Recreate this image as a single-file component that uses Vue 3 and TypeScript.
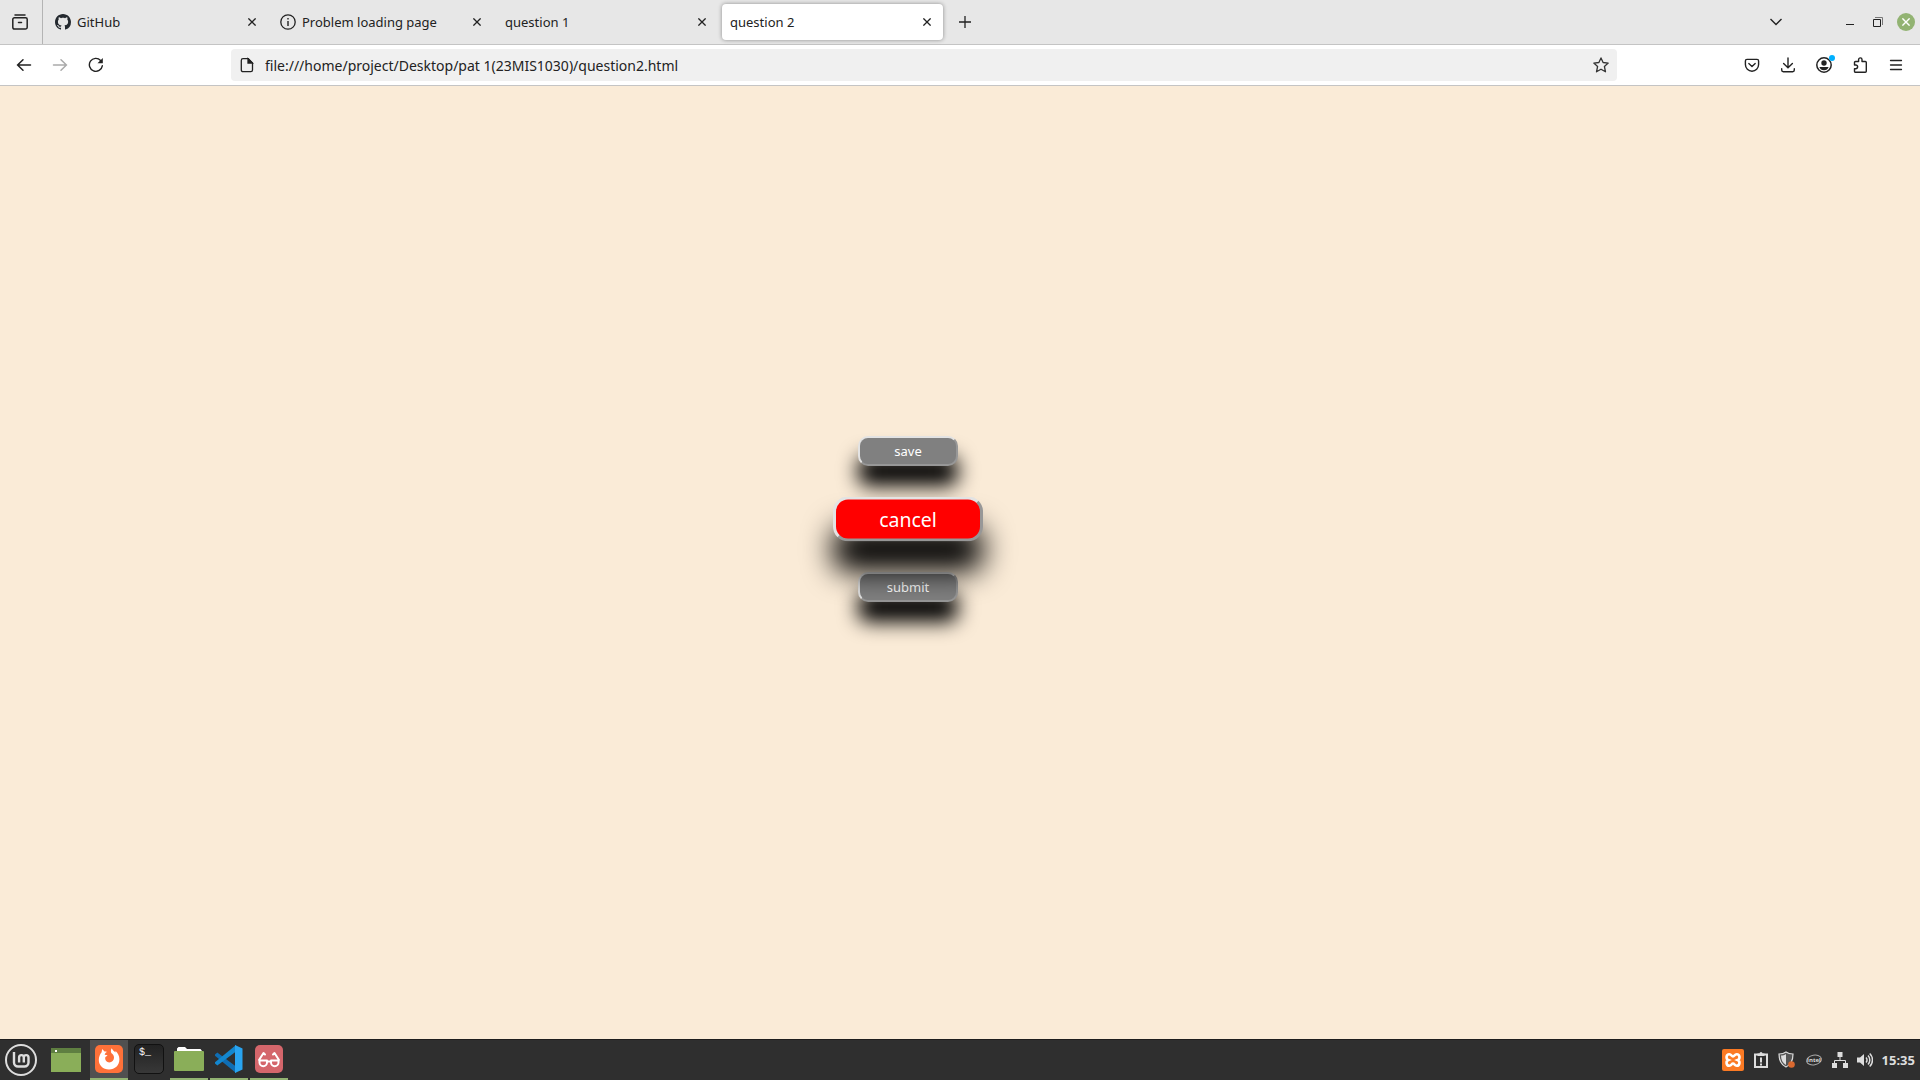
<script setup lang="ts">
interface Tab {
  title: string
  icon?: 'github' | 'info'
  active?: boolean
}

const tabs: Tab[] = [
  { title: 'GitHub', icon: 'github' },
  { title: 'Problem loading page', icon: 'info' },
  { title: 'question 1' },
  { title: 'question 2', active: true },
]

const url = 'file:///home/project/Desktop/pat 1(23MIS1030)/question2.html'
</script>

<template>
  <div class="screen">
    <header class="tabstrip">
      <button class="view-btn" aria-label="Recent browsing">
        <svg width="16" height="16" viewBox="0 0 16 16" fill="none" stroke="#222" stroke-width="1.5" stroke-linecap="round">
          <path d="M3 .9h10M2.4 3.7h11.2a1.6 1.6 0 0 1 1.6 1.6v8a1.8 1.8 0 0 1-1.8 1.8H2.6a1.8 1.8 0 0 1-1.8-1.8v-8a1.6 1.6 0 0 1 1.6-1.6zM6.5 8.4h3" />
        </svg>
      </button>
      <div class="tabs">
        <div v-for="tab in tabs" :key="tab.title" class="tab" :class="{ active: tab.active }">
          <svg v-if="tab.icon === 'github'" width="16" height="16" viewBox="0 0 16 16" fill="#24292f">
            <path d="M8 0C3.58 0 0 3.58 0 8c0 3.54 2.29 6.53 5.47 7.59.4.07.55-.17.55-.38 0-.19-.01-.82-.01-1.49-2.01.37-2.53-.49-2.69-.94-.09-.23-.48-.94-.82-1.13-.28-.15-.68-.52-.01-.53.63-.01 1.08.58 1.23.82.72 1.21 1.87.87 2.33.66.07-.52.28-.87.51-1.07-1.78-.2-3.64-.89-3.64-3.95 0-.87.31-1.59.82-2.15-.08-.2-.36-1.02.08-2.12 0 0 .67-.21 2.2.82.64-.18 1.32-.27 2-.27s1.36.09 2 .27c1.53-1.04 2.2-.82 2.2-.82.44 1.1.16 1.92.08 2.12.51.56.82 1.27.82 2.15 0 3.07-1.87 3.75-3.65 3.95.29.25.54.73.54 1.48 0 1.07-.01 1.93-.01 2.2 0 .21.15.46.55.38A8.01 8.01 0 0 0 16 8c0-4.42-3.58-8-8-8z" />
          </svg>
          <svg v-else-if="tab.icon === 'info'" width="16" height="16" viewBox="0 0 16 16" fill="none" stroke="#222" stroke-width="1.3">
            <circle cx="8" cy="8" r="7.2" />
            <path d="M8 7v5M8 4.100v1.500" stroke-width="1.4" />
          </svg>
          <span class="tab-title">{{ tab.title }}</span>
          <button class="tab-close" :aria-label="'Close ' + tab.title">
            <svg width="8" height="8" viewBox="0 0 8 8" stroke="#222" stroke-width="1.3"><path d="M.4.4l7.2 7.2M7.6.4L.4 7.6" /></svg>
          </button>
        </div>
      </div>
      <button class="new-tab" aria-label="New tab">
        <svg width="12" height="12" viewBox="0 0 12 12" stroke="#222" stroke-width="1.3"><path d="M6 0v12M0 6h12" /></svg>
      </button>
      <div class="window-controls">
        <button class="list-tabs" aria-label="List all tabs">
          <svg width="12" height="8" viewBox="0 0 12 8" fill="none" stroke="#222" stroke-width="1.4"><path d="M.5 1L6 6.5 11.5 1" /></svg>
        </button>
        <button aria-label="Minimize">
          <svg width="10" height="12" viewBox="0 0 10 12" stroke="#222"><path d="M1 8.5h8" /></svg>
        </button>
        <button aria-label="Restore">
          <svg width="10" height="10" viewBox="0 0 10 10" fill="none"><path d="M2 .5h7.500v7.500" stroke="#777" /><path d="M.5 2.500h7v7h-7z" stroke="#222" /></svg>
        </button>
        <button class="close-window" aria-label="Close window">
          <svg width="8" height="8" viewBox="0 0 8 8" stroke="#fff" stroke-width="1.4"><path d="M.4.4l7.2 7.2M7.6.4L.4 7.6" /></svg>
        </button>
      </div>
    </header>

    <nav class="toolbar">
      <button class="tool" aria-label="Back">
        <svg width="16" height="16" viewBox="0 0 16 16" fill="none" stroke="#222" stroke-width="1.5" stroke-linecap="round"><path d="M14.500 8H1.800M7 2.700L1.600 8 7 13.300" /></svg>
      </button>
      <button class="tool" aria-label="Forward" disabled>
        <svg width="16" height="16" viewBox="0 0 16 16" fill="none" stroke="#aaa" stroke-width="1.5" stroke-linecap="round"><path d="M1.500 8h12.700M9 2.700L14.400 8 9 13.300" /></svg>
      </button>
      <button class="tool" aria-label="Reload">
        <svg width="16" height="16" viewBox="0 0 16 16" fill="none" stroke="#222" stroke-width="1.4" stroke-linecap="round"><path d="M14.300 8.800A6.500 6.500 0 1 1 12.600 3.400" /><path d="M14.800 1v5.300H9.500z" fill="#222" stroke="none" /></svg>
      </button>
      <div class="spacer"></div>
      <div class="urlbar">
        <svg width="16" height="16" viewBox="0 0 16 16" fill="none" stroke="#222" stroke-width="1.3"><path d="M4 1.700h5.300l4.200 4.200v7.100a1.700 1.700 0 0 1-1.700 1.700H4A1.700 1.700 0 0 1 2.300 13V3.400A1.700 1.700 0 0 1 4 1.700z" /><path d="M9 1.700v4.400h4.400z" fill="#222" /></svg>
        <input :value="url" type="text" aria-label="Address" />
        <button class="star" aria-label="Bookmark this page">
          <svg width="16" height="16" viewBox="0 0 16 16" fill="none" stroke="#333" stroke-width="1.3" stroke-linejoin="round"><path d="M8 .9l2.100 4.600 5.100.6-3.800 3.400 1.100 5.300L8 12.200l-4.500 2.600 1.100-5.300L.8 6.100l5.100-.6z" /></svg>
        </button>
      </div>
      <div class="spacer"></div>
      <button class="tool" aria-label="Save to Pocket">
        <svg width="16" height="16" viewBox="0 0 16 16" fill="none" stroke="#222" stroke-width="1.4" stroke-linecap="round" stroke-linejoin="round"><path d="M3 2.400h10a1.600 1.600 0 0 1 1.600 1.600v3.600a6.600 6.600 0 0 1-13.200 0V4A1.600 1.600 0 0 1 3 2.400z" /><path d="M4.800 6.600L8 9.500l3.200-2.900" /></svg>
      </button>
      <button class="tool" aria-label="Downloads">
        <svg width="16" height="16" viewBox="0 0 16 16" fill="none" stroke="#222" stroke-width="1.4" stroke-linecap="round"><path d="M8 1v9.600M3.600 6.500L8 10.800l4.400-4.300M1.700 11.800v1.300a1.600 1.600 0 0 0 1.600 1.600h9.400a1.600 1.600 0 0 0 1.600-1.600v-1.300" /></svg>
      </button>
      <button class="tool account" aria-label="Account">
        <svg width="16" height="16" viewBox="0 0 16 16"><circle cx="8" cy="8" r="7.200" fill="none" stroke="#222" stroke-width="1.5" /><circle cx="8" cy="6" r="2.700" fill="#222" /><path d="M3.400 10h9.200c-.5 2-2.200 3.300-4.600 3.300S3.900 12 3.400 10z" fill="#222" /></svg>
        <span class="dot"></span>
      </button>
      <button class="tool" aria-label="Extensions">
        <svg width="16" height="16" viewBox="0 0 16 16" fill="none" stroke="#222" stroke-width="1.4" stroke-linejoin="round"><path d="M2.500 8V5.500a1 1 0 0 1 1-1h3.100V2.600a1.700 1.700 0 0 1 3.400 0v1.900h3.300a1 1 0 0 1 1 1v8.700a1 1 0 0 1-1 1H3.500a1 1 0 0 1-1-1v-2.500h1.300a1.800 1.800 0 0 0 0-3.700z" /></svg>
      </button>
      <button class="tool" aria-label="Open application menu">
        <svg width="16" height="16" viewBox="0 0 16 16" stroke="#222" stroke-width="1.3" stroke-linecap="round"><path d="M2.500 3.500h11M2.500 8h11M2.500 12.500h11" /></svg>
      </button>
    </nav>

    <main class="page">
      <button class="action">save</button>
      <button class="action hovered">cancel</button>
      <button class="action">submit</button>
    </main>

    <footer class="taskbar">
      <button class="menu" aria-label="Menu">
        <svg width="32" height="32" viewBox="0 0 32 32" fill="none" stroke="#ddd"><circle cx="16" cy="16" r="15" stroke-width="2" /><path d="M9 8v10.500a4 4 0 0 0 4 4h6.500a4 4 0 0 0 4-4V13.500a2.300 2.300 0 0 0-4.700 0v5M18.800 18.500v-5a2.300 2.300 0 0 0-4.700 0v5" stroke-width="2.400" /></svg>
      </button>
      <button class="desktop" aria-label="Show desktop">
        <svg width="30" height="24" viewBox="0 0 30 24"><path d="M0 0h30v24H0z" fill="#8aae59" /><path d="M0 0h30v5H0z" fill="#5f7f41" /><path d="M4 2h2v2H4z" fill="#fff" /></svg>
      </button>
      <button class="task focused" aria-label="Firefox">
        <svg width="30" height="30" viewBox="0 0 30 30"><rect x="1" y="1" width="28" height="28" rx="5" fill="#ff7139" /><path d="M15 25.500c-6 0-10.200-4.200-10.200-9.500 0-3.300 1.200-5.800 2.800-7.800l.6-3.200 2.300 2.600c1-.1 1.700 0 2.400.3-1.500.8-2 1.700-2.200 2.800l2.700.6c.3.900-1.900 1.300-2.200 2.200-.3 2.800 1.600 4.900 4 4.900 2.800 0 4.800-2 4.800-4.600 0-2.200-1-3.700-2.700-4.900-.6-1.500-.5-3.200.3-4.700 1.100 2 2.600 3 3.800 4.300l.2-1.600c2.400 2.100 3.800 4.800 3.800 8.300 0 6-4.400 10.300-10.400 10.300z" fill="#fff" /></svg>
      </button>
      <button class="task idle" aria-label="Terminal">
        <span class="terminal">$_</span>
      </button>
      <button class="task" aria-label="Files">
        <svg width="30" height="30" viewBox="0 0 30 30"><path d="M3 9V4.500L4.500 3H11l2 2h13.500L28 7v3H3z" fill="#fff" /><rect y="7" width="30" height="20" rx="1" fill="#8aae59" /></svg>
      </button>
      <button class="task" aria-label="Visual Studio Code">
        <svg width="30" height="30" viewBox="0 0 30 30"><path d="M1 10.500l2.300-2.100L22 22.500V29L1 11.800z" fill="#0f6eb4" /><path d="M1 19.500l2.300 2.100L22 7.500V1L1 18.200z" fill="#1387cf" /><path d="M21 1l7.500 3.500v21L21 29z" fill="#29a4f0" /></svg>
      </button>
      <button class="task" aria-label="Reader">
        <svg width="30" height="30" viewBox="0 0 30 30"><rect x="1" y="1" width="28" height="28" rx="5" fill="#d4666b" /><g fill="none" stroke="#fff" stroke-width="2" stroke-linecap="round" stroke-linejoin="round"><path d="M5.500 16.500h7.500v2a3.700 3.700 0 0 1-7.500 0zM17 16.500h7.500v2a3.700 3.700 0 0 1-7.500 0zM13 17.500h4M5 16l4.500-7 1.500 1.500M25 16l-4.500-7-1.500 1.500" /></g></svg>
      </button>

      <div class="tray">
        <svg width="22" height="22" viewBox="0 0 22 22"><rect width="22" height="22" rx="2" fill="#fb7a24" /><path d="M7.300 5.200c2.200 0 2.200 2.300 3.700 2.300s1.500-2.300 3.700-2.300c3.300 0 3.600 4.800 1 5.800 2.600 1 2.300 5.800-1 5.800-2.200 0-2.200-2.300-3.700-2.300s-1.500 2.300-3.700 2.300c-3.300 0-3.600-4.800-1-5.800-2.600-1-2.300-5.800 1-5.800z" fill="none" stroke="#fff" stroke-width="2.600" /></svg>
        <svg width="16" height="18" viewBox="0 0 16 18"><path d="M2 3.500h12v12.500H2z" fill="none" stroke="#ddd" stroke-width="2" /><path d="M4.500 2.500h2a1.500 1.500 0 0 1 3 0h2V5h-7zM7 6.500h2v5H7zM7 12.500h2v2H7z" fill="#ddd" /></svg>
        <svg width="18" height="18" viewBox="0 0 18 18"><path d="M8 1c2 1.500 4.500 2 7 2 0 6-1.500 10.500-7 13C2.500 13.500 1 9 1 3c2.500 0 5-.5 7-2z" fill="#555" stroke="#ddd" stroke-width="1.2" /><path d="M8 3v11c-3.300-2-5-5-5-9.500C5 4.500 6.500 4 8 3z" fill="#ddd" /><circle cx="13.500" cy="13.500" r="3.300" fill="#d9682f" /></svg>
        <svg width="18" height="14" viewBox="0 0 18 14"><ellipse cx="9" cy="7" rx="7.500" ry="4.800" transform="rotate(-10 9 7)" fill="none" stroke="#aaa" /><text x="9" y="9" text-anchor="middle" font-family="Open Sans, sans-serif" font-size="6" font-weight="700" fill="#ddd">intel</text></svg>
        <svg width="16" height="16" viewBox="0 0 16 16"><path d="M5.500 0h5v5h-5zM0 11h5v5H0zM11 11h5v5h-5z" fill="#ddd" /><path d="M8 5v3.500M2.500 11V8.500h11V11" fill="none" stroke="#ddd" /></svg>
        <svg width="16" height="16" viewBox="0 0 16 16"><path d="M0 5.500h3L7 2v12L3 10.500H0z" fill="#ddd" /><path d="M9 5.500a3.500 3.500 0 0 1 0 5M11 3.500a6.500 6.500 0 0 1 0 9M12.700 1.500a9 9 0 0 1 0 13" fill="none" stroke="#ddd" stroke-width="1.5" /></svg>
        <time>15:35</time>
      </div>
    </footer>
  </div>
</template>

<style>
body {
  margin: 0;
}
</style>

<style scoped>
.screen {
  display: flex;
  flex-direction: column;
  min-height: 100vh;
  font-family: "Noto Sans", "Open Sans", sans-serif;
  font-size: 13px;
  color: #222;
}
svg {
  display: block;
  flex: none;
}
button {
  font: inherit;
  color: inherit;
  border: 0;
  padding: 0;
  background: none;
}
.tabstrip {
  display: flex;
  align-items: center;
  height: 44px;
  background: #e7e7e7;
  border-bottom: 1px solid #c4c4c4;
}
.view-btn {
  display: grid;
  place-items: center;
  align-self: stretch;
  box-sizing: border-box;
  width: 43px;
  padding-right: 2px;
  border-right: 1px solid #b4b4b4;
}
.tabs {
  display: flex;
  gap: 4px;
  margin-left: 4px;
}
.tab {
  display: flex;
  align-items: center;
  gap: 6px;
  box-sizing: border-box;
  width: 221px;
  height: 36px;
  padding: 0 12px 0 8px;
  border-radius: 4px;
}
.tab.active {
  background: #fff;
  box-shadow: 0 0 4px rgba(0, 0, 0, 0.4);
}
.tab-title {
  flex: 1;
  white-space: nowrap;
}
.new-tab {
  display: grid;
  place-items: center;
  width: 36px;
  height: 36px;
  margin-left: 4px;
}
.window-controls {
  display: flex;
  align-items: center;
  gap: 18px;
  margin-left: auto;
  padding-right: 5px;
}
.list-tabs {
  margin-right: 45px;
}
.window-controls .close-window {
  display: grid;
  place-items: center;
  width: 18px;
  height: 18px;
  margin-left: -4px;
  border-radius: 50%;
  background: #92b372;
}
.toolbar {
  display: flex;
  align-items: center;
  height: 40px;
  padding: 0 6px;
  background: #fff;
  border-bottom: 1px solid #c4c4c4;
}
.tool {
  position: relative;
  display: grid;
  place-items: center;
  width: 36px;
  height: 32px;
}
.account .dot {
  position: absolute;
  top: 6px;
  right: 7px;
  width: 6px;
  height: 6px;
  border-radius: 50%;
  background: #00b0ff;
}
.spacer {
  flex: 0 1 117px;
}
.urlbar {
  display: flex;
  align-items: center;
  flex: 1;
  height: 32px;
  padding: 0 8px;
  background: #f0f0f0;
  border-radius: 4px;
}
.urlbar input {
  flex: 1;
  border: 0;
  padding: 0 0 0 10px;
  background: none;
  outline: 0;
  font: inherit;
  font-size: 14px;
  color: #222;
}
.page {
  display: flex;
  flex: 1;
  flex-direction: column;
  align-items: center;
  gap: 38px;
  padding: 350px 104px 0 0;
  background: #faebd7;
}
.action {
  width: 100px;
  height: 30px;
  border: 2px solid;
  border-color: #e3e3e3 #979797 #979797 #e3e3e3;
  border-radius: 10px;
  background: #808080;
  color: #fff;
  box-shadow: 0 20px 20px #000;
}
.action.hovered {
  background: #f00;
  transform: scale(1.5);
}
.taskbar {
  display: flex;
  align-items: stretch;
  height: 40px;
  border-top: 1px solid #1d1d1d;
  background: #2f2f2f;
}
.menu {
  width: 42px;
  display: grid;
  place-items: center;
}
.desktop {
  display: grid;
  place-items: center;
  width: 48px;
}
.task {
  display: grid;
  place-items: center;
  box-sizing: border-box;
  width: 38px;
  margin-right: 2px;
  border-bottom: 2px solid #92b372;
}
.task.idle {
  border-color: transparent;
}
.task.focused {
  background: #505050;
}
.terminal {
  box-sizing: border-box;
  width: 30px;
  height: 30px;
  padding: 3px 4px;
  border: 1px solid #111;
  border-radius: 5px;
  background: linear-gradient(#222, #383838);
  color: #fff;
  font: 10px/9px "Liberation Mono", monospace;
  text-align: left;
}
.tray {
  display: flex;
  align-items: center;
  gap: 9px;
  margin-left: auto;
  padding-right: 5px;
  color: #ddd;
  font-weight: 700;
}
</style>
